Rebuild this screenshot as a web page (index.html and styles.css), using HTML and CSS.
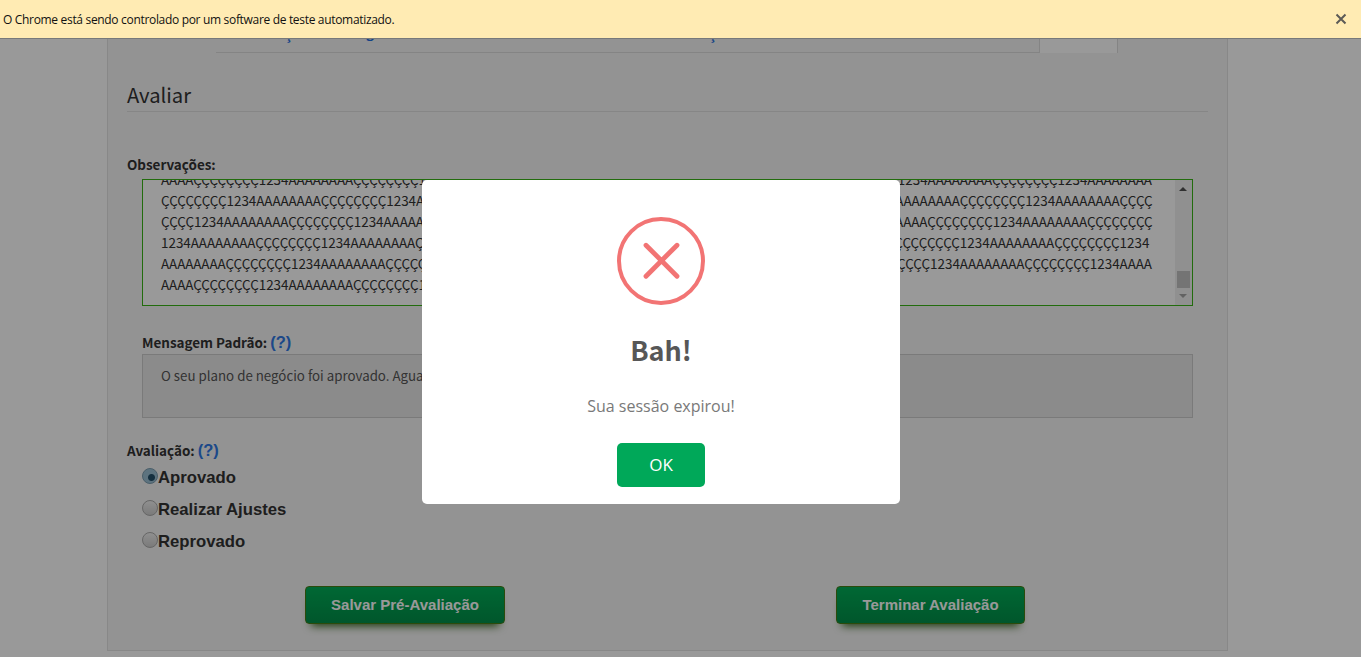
FILE: index.html
```html
<!DOCTYPE html>
<html lang="pt-BR">
<head>
<meta charset="utf-8">
<title>Avaliar</title>
<link rel="stylesheet" href="styles.css">
</head>
<body>
<header class="infobar">
  <span class="infobar-text">O Chrome está sendo controlado por um software de teste automatizado.</span>
  <svg class="infobar-close" width="12" height="12" viewBox="0 0 12 12"><path d="M1.5 1.5L10.5 10.5M10.5 1.5L1.5 10.5" stroke="#5c5a56" stroke-width="2"/></svg>
</header>
<main class="card">
  <div class="tabs">
    <div class="tabs-rest"><span class="tab-link">ç</span><span class="tab-link second">g</span><span class="tab-link third">ç</span></div>
    <div class="tab-active"></div>
  </div>
  <h1 class="title">Avaliar</h1>
  <div class="label obs-label">Observações:</div>
  <div class="textarea">
    <div class="lines">
      <div>AAAAÇÇÇÇÇÇÇÇ1234AAAAAAAAÇÇÇÇÇÇÇÇ1234AAAAAAAAÇÇÇÇÇÇÇÇ1234AAAAAAAAÇÇÇÇÇÇÇÇ1234AAAAAAAAÇÇÇÇÇÇÇÇ1234AAAAAAAAÇÇÇÇÇÇÇÇ1234AAAAAAAA</div>
      <div>ÇÇÇÇÇÇÇÇ1234AAAAAAAAÇÇÇÇÇÇÇÇ1234AAAAAAAAÇÇÇÇÇÇÇÇ1234AAAAAAAAÇÇÇÇÇÇÇÇ1234AAAAAAAAÇÇÇÇÇÇÇÇ1234AAAAAAAAÇÇÇÇÇÇÇÇ1234AAAAAAAAÇÇÇÇ</div>
      <div>ÇÇÇÇ1234AAAAAAAAÇÇÇÇÇÇÇÇ1234AAAAAAAAÇÇÇÇÇÇÇÇ1234AAAAAAAAÇÇÇÇÇÇÇÇ1234AAAAAAAAÇÇÇÇÇÇÇÇ1234AAAAAAAAÇÇÇÇÇÇÇÇ1234AAAAAAAAÇÇÇÇÇÇÇÇ</div>
      <div>1234AAAAAAAAÇÇÇÇÇÇÇÇ1234AAAAAAAAÇÇÇÇÇÇÇÇ1234AAAAAAAAÇÇÇÇÇÇÇÇ1234AAAAAAAAÇÇÇÇÇÇÇÇ1234AAAAAAAAÇÇÇÇÇÇÇÇ1234AAAAAAAAÇÇÇÇÇÇÇÇ1234</div>
      <div>AAAAAAAAÇÇÇÇÇÇÇÇ1234AAAAAAAAÇÇÇÇÇÇÇÇ1234AAAAAAAAÇÇÇÇÇÇÇÇ1234AAAAAAAAÇÇÇÇÇÇÇÇ1234AAAAAAAAÇÇÇÇÇÇÇÇ1234AAAAAAAAÇÇÇÇÇÇÇÇ1234AAAA</div>
      <div>AAAAÇÇÇÇÇÇÇÇ1234AAAAAAAAÇÇÇÇÇÇÇÇ1234AAAAAAAAÇÇÇÇÇÇÇÇ</div>
    </div>
    <div class="scrollbar">
      <svg width="8" height="4" viewBox="0 0 8 4"><path d="M0 4L4 0L8 4Z" fill="#505050"/></svg>
      <div class="thumb"></div>
      <svg width="8" height="4" viewBox="0 0 8 4"><path d="M0 0L4 4L8 0Z" fill="#a3a3a3"/></svg>
    </div>
  </div>
  <div class="label msg-label">Mensagem Padrão: <span class="help">(?)</span></div>
  <div class="message">O seu plano de negócio foi aprovado. Aguarde</div>
  <div class="label eval-label">Avaliação: <span class="help">(?)</span></div>
  <div class="radios">
    <div class="option"><span class="radio checked"></span><span class="option-text">Aprovado</span></div>
    <div class="option"><span class="radio"></span><span class="option-text">Realizar Ajustes</span></div>
    <div class="option"><span class="radio"></span><span class="option-text">Reprovado</span></div>
  </div>
  <div class="actions">
    <button class="btn save">Salvar Pré-Avaliação</button>
    <button class="btn finish">Terminar Avaliação</button>
  </div>
</main>
<div class="overlay">
  <section class="modal">
    <svg class="error-icon" width="88" height="88" viewBox="0 0 88 88" fill="none" stroke="#f27474"><circle cx="44" cy="44" r="42" stroke-width="4"/><path d="M29 28.2L60 59.2M60 28.2L29 59.2" stroke-width="4.8" stroke-linecap="round"/></svg>
    <h2 class="modal-title">Bah!</h2>
    <p class="modal-text">Sua sessão expirou!</p>
    <button class="ok">OK</button>
  </section>
</div>
</body>
</html>
```
FILE: styles.css
```css
* { box-sizing: border-box; }
body {
  margin: 0;
  height: 657px;
  overflow: hidden;
  background: #fff;
  color: #333;
  font-family: "Noto Sans CJK JP", sans-serif;
  font-size: 13.3px;
}
.infobar {
  position: relative;
  z-index: 3;
  display: flex;
  align-items: center;
  justify-content: space-between;
  height: 39px;
  padding: 0 14px 0 3px;
  background: #ffebb3;
  border-bottom: 1px solid #77797a;
  color: #111;
  font: 12px "Open Sans", sans-serif;
  letter-spacing: -0.32px;
}
.infobar-text { white-space: nowrap; padding-top: 1px; }
.card {
  width: 1121px;
  height: 612px;
  margin-left: 107px;
  padding: 0 19px;
  background: #f5f5f5;
  border: 1px solid #e3e3e3;
  border-top: 0;
}
.tabs { display: flex; height: 14px; padding-left: 89px; }
.tabs-rest {
  display: flex;
  width: 823px;
  border-bottom: 1px solid #ddd;
  padding-left: 69px;
}
.tab-link {
  width: 8px;
  margin-top: -13px;
  height: 20px;
  line-height: 15px;
  color: #1f6fe0;
  font-weight: 700;
}
.tab-link.second { margin-left: 73px; margin-top: -14px; }
.tab-link.third { margin-left: 335px; }
.tab-active { width: 79px; background: #fff; border: 1px solid #ddd; border-width: 0 1px; }
.title {
  margin: 29px 0 0;
  height: 30px;
  border-bottom: 1px solid #e0e0e0;
  font-size: 20.2px;
  line-height: 26px;
  font-weight: 400;
}
.label { font-weight: 700; line-height: 18px; height: 20px; white-space: nowrap; font-size: 13.45px; }
.obs-label { margin-top: 43px; }
.textarea {
  display: flex;
  justify-content: space-between;
  width: 1051px;
  height: 127px;
  margin: 4px 0 0 15px;
  border: 1px solid #3ab516;
  background: #fff;
  overflow: hidden;
}
.lines { padding-left: 18px; margin-top: -11px; line-height: 21px; white-space: nowrap; font-size: 13.43px; }
.scrollbar {
  display: flex;
  flex-direction: column;
  align-items: center;
  width: 17px;
  padding: 7px 1px 7px 0;
  background: #f1f1f1;
}
.thumb { flex: none; width: 13px; height: 17px; margin: auto 0 6px; background: #c1c1c1; }
.msg-label { margin: 27px 0 0 15px; }
.help { color: #2f78e4; font: bold 16.5px/18px "Liberation Sans", sans-serif; }
.message {
  width: 1051px;
  height: 64px;
  margin: 1px 0 0 15px;
  padding: 10px 18px;
  border: 1px solid #ccc;
  background: #e8e8e8;
  color: #555;
  line-height: 21px;
}
.eval-label { margin-top: 23px; }
.radios { margin-left: 15px; }
.option { display: flex; align-items: flex-start; height: 32px; padding-top: 7px; font: bold 16.7px/20px "Liberation Sans", sans-serif; }
.radio {
  width: 16px;
  height: 16px;
  border: 1px solid #aaa;
  border-radius: 50%;
  background: linear-gradient(#f0f0f0, #ccc);
}
.radio.checked { background: radial-gradient(circle at 8.5px 8.5px, #24506b 3px, transparent 4px), #9bc0d4; border-color: #7c9db0; }
.actions { display: flex; padding: 29px 0 0 178px; }
.btn {
  height: 38px;
  padding: 0 0 2px;
  border: 1px solid #487d15;
  border-radius: 4px;
  background: linear-gradient(#00ad57, #009049);
  box-shadow: 0 8px 8px -6px #306018;
  color: #fff;
  font: bold 15px "Liberation Sans", sans-serif;
}
.save { width: 200px; }
.finish { width: 189px; margin-left: 331px; }
.overlay { position: fixed; inset: 0; z-index: 2; background: rgba(0,0,0,.4); }
.modal {
  position: absolute;
  left: 422px;
  top: 180px;
  width: 478px;
  height: 324px;
  display: flex;
  flex-direction: column;
  align-items: center;
  padding-top: 37px;
  border-radius: 5px;
  background: #fff;
}
.modal-title { margin: 25px 0 0; height: 40px; line-height: 40px; font-size: 27px; color: #575757; }
.modal-text { margin: 24px 0 0; height: 24px; font: 16px/24px "Open Sans", sans-serif; color: #797979; }
.ok { width: 88px; height: 44px; margin-top: 25px; padding: 0 0 2px; border: 0; border-radius: 5px; background: #00a859; color: #fff; font: 17px "Open Sans", sans-serif; }
```
